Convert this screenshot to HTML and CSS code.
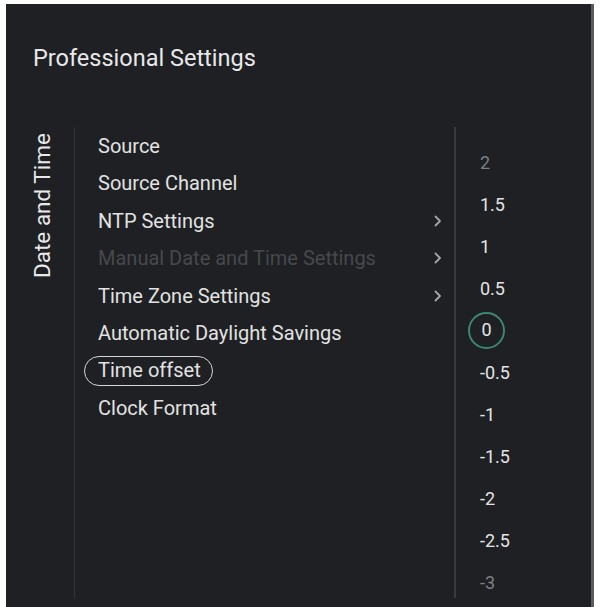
FILE: index.html
```html
<!DOCTYPE html>
<html lang="en">
<head>
<meta charset="utf-8">
<title>Professional Settings</title>
<link rel="stylesheet" href="styles.css">
</head>
<body>
<div class="panel">
  <h1 class="title">Professional Settings</h1>
  <div class="body">
    <div class="side"><span class="side-label">Date and Time</span></div>
    <ul class="menu">
      <li class="item">Source</li>
      <li class="item">Source Channel</li>
      <li class="item has-sub">NTP Settings<svg class="chev" viewBox="0 0 8 12" width="8" height="12"><path d="M1.5 1.5 L6 6 L1.5 10.5" fill="none" stroke="currentColor" stroke-width="1.8" stroke-linecap="round" stroke-linejoin="round"/></svg></li>
      <li class="item has-sub disabled">Manual Date and Time Settings<svg class="chev" viewBox="0 0 8 12" width="8" height="12"><path d="M1.5 1.5 L6 6 L1.5 10.5" fill="none" stroke="currentColor" stroke-width="1.8" stroke-linecap="round" stroke-linejoin="round"/></svg></li>
      <li class="item has-sub">Time Zone Settings<svg class="chev" viewBox="0 0 8 12" width="8" height="12"><path d="M1.5 1.5 L6 6 L1.5 10.5" fill="none" stroke="currentColor" stroke-width="1.8" stroke-linecap="round" stroke-linejoin="round"/></svg></li>
      <li class="item">Automatic Daylight Savings</li>
      <li class="item"><span class="pill">Time offset</span></li>
      <li class="item">Clock Format</li>
    </ul>
    <ul class="values">
      <li class="val dim">2</li>
      <li class="val">1.5</li>
      <li class="val">1</li>
      <li class="val">0.5</li>
      <li class="val"><span class="ring">0</span></li>
      <li class="val">-0.5</li>
      <li class="val">-1</li>
      <li class="val">-1.5</li>
      <li class="val">-2</li>
      <li class="val">-2.5</li>
      <li class="val dim">-3</li>
    </ul>
  </div>
</div>
</body>
</html>
```
FILE: styles.css
```css
html, body {
  margin: 0;
  padding: 0;
  background: #ffffff;
}
body {
  width: 601px;
  height: 607px;
  overflow: hidden;
  font-family: Roboto, "Liberation Sans", sans-serif;
}
.panel {
  margin: 4px 0 0 6px;
  width: 588px;
  height: 603px;
  background: #1e2023;
  display: flex;
  flex-direction: column;
  box-sizing: border-box;
  border-right: 3px solid #5a5c5e;
}
.title {
  margin: 0;
  padding: 41px 0 0 27px;
  height: 123px;
  flex: none;
  box-sizing: border-box;
  font-size: 23.5px;
  font-weight: 400;
  color: #e8e8e8;
  line-height: 26px;
}
.body {
  flex: 1;
  display: flex;
  padding-bottom: 9px;
  min-height: 0;
}
.side {
  width: 68px;
  flex: none;
  border-right: 1px solid #323538;
  position: relative;
}
.side-label {
  position: absolute;
  left: 24px;
  top: 151px;
  transform-origin: 0 0;
  transform: rotate(-90deg);
  white-space: nowrap;
  font-size: 22.5px;
  color: #e8e8e8;
  line-height: 24px;
}
.menu {
  list-style: none;
  margin: 0;
  padding: 0 0 0 23px;
  width: 381px;
  flex: none;
  box-sizing: border-box;
  border-right: 2px solid #383b3e;
}
.item {
  height: 37.5px;
  font-size: 20px;
  color: #e2e2e2;
  display: flex;
  align-items: center;
  padding-right: 12px;
  white-space: nowrap;
}
.item.disabled {
  color: #46494c;
}
.chev {
  margin-left: auto;
  color: #a3a5a7;
}
.item.disabled .chev {
  color: #a3a5a7;
}
.pill {
  margin-left: -14px;
  padding: 0 11px 0 13px;
  height: 28px;
  line-height: 27px;
  border: 1.5px solid #d6d6d6;
  border-radius: 16px;
}
.values {
  list-style: none;
  margin: 0;
  padding: 14px 0 0 24px;
}
.val {
  height: 42px;
  font-size: 18px;
  color: #e4e4e4;
  display: flex;
  align-items: center;
}
.val.dim {
  color: #7c7f82;
}
.ring {
  width: 33px;
  height: 33px;
  margin-left: -12px;
  border: 2px solid #3a8672;
  border-radius: 50%;
  display: flex;
  align-items: center;
  justify-content: center;
  line-height: 1;
}
```
